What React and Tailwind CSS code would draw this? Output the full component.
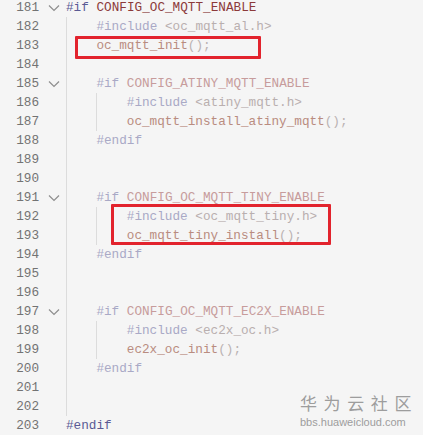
import React from 'react';

const colors = {
  dir: 'text-[#5a5a94]',
  macro: 'text-[#8c3a3a]',
  fdir: 'text-[#a9a9c6]',
  fmacro: 'text-[#c79c9c]',
  fstr: 'text-[#b9afaf]',
  ffn: 'text-[#b98c80]',
  fpunc: 'text-[#bab2b2]',
};

const lines = [
  { n: 181, fold: true, indent: 0, tokens: [['#if ', 'dir'], ['CONFIG_OC_MQTT_ENABLE', 'macro']] },
  { n: 182, indent: 1, tokens: [['#include ', 'fdir'], ['<oc_mqtt_al.h>', 'fstr']] },
  { n: 183, indent: 1, tokens: [['oc_mqtt_init', 'ffn'], ['();', 'fpunc']] },
  { n: 184, indent: 1, tokens: [] },
  { n: 185, fold: true, indent: 1, tokens: [['#if ', 'fdir'], ['CONFIG_ATINY_MQTT_ENABLE', 'fmacro']] },
  { n: 186, indent: 2, tokens: [['#include ', 'fdir'], ['<atiny_mqtt.h>', 'fstr']] },
  { n: 187, indent: 2, tokens: [['oc_mqtt_install_atiny_mqtt', 'ffn'], ['();', 'fpunc']] },
  { n: 188, indent: 1, tokens: [['#endif', 'fdir']] },
  { n: 189, indent: 1, tokens: [] },
  { n: 190, indent: 1, tokens: [] },
  { n: 191, fold: true, indent: 1, tokens: [['#if ', 'fdir'], ['CONFIG_OC_MQTT_TINY_ENABLE', 'fmacro']] },
  { n: 192, indent: 2, tokens: [['#include ', 'fdir'], ['<oc_mqtt_tiny.h>', 'fstr']] },
  { n: 193, indent: 2, tokens: [['oc_mqtt_tiny_install', 'ffn'], ['();', 'fpunc']] },
  { n: 194, indent: 1, tokens: [['#endif', 'fdir']] },
  { n: 195, indent: 1, tokens: [] },
  { n: 196, indent: 1, tokens: [] },
  { n: 197, fold: true, indent: 1, tokens: [['#if ', 'fdir'], ['CONFIG_OC_MQTT_EC2X_ENABLE', 'fmacro']] },
  { n: 198, indent: 2, tokens: [['#include ', 'fdir'], ['<ec2x_oc.h>', 'fstr']] },
  { n: 199, indent: 2, tokens: [['ec2x_oc_init', 'ffn'], ['();', 'fpunc']] },
  { n: 200, indent: 1, tokens: [['#endif', 'fdir']] },
  { n: 201, indent: 1, tokens: [] },
  { n: 202, indent: 1, tokens: [] },
  { n: 203, indent: 0, tokens: [['#endif', 'dir']] },
];

const Chevron = () => (
  <svg width="12" height="8" viewBox="0 0 12 8" fill="none">
    <path d="M1 1.5 L6 6.5 L11 1.5" stroke="#8e8e8e" strokeWidth="1.2" />
  </svg>
);

const CodeLine = ({ line }) => (
  <div className="flex h-[19px] items-center">
    <div className="w-[39px] text-right text-[#737373]">{line.n}</div>
    <div className="flex w-[27px] justify-center pl-[3px]">{line.fold && <Chevron />}</div>
    <div className="flex h-full items-center whitespace-pre">
      {Array.from({ length: line.indent }).map((_, i) => (
        <span key={i} className="h-full w-[30.4px] shrink-0 border-l border-[#dcdcdc]" />
      ))}
      {line.tokens.map(([text, kind], i) => (
        <span key={i} className={colors[kind]}>{text}</span>
      ))}
    </div>
  </div>
);

export default function App() {
  return (
    <div className="relative h-[435px] w-[423px] overflow-hidden bg-[#f5f5f5]">
      <div className="relative -mt-[2px] text-[12.7px] [font-family:'Liberation_Mono',monospace]">
        {lines.map((line) => (
          <CodeLine key={line.n} line={line} />
        ))}
        <div className="absolute left-[75px] top-[38px] h-[23px] w-[186px] rounded-[1px] border-[3px] border-[#e2232d]" />
        <div className="absolute left-[111px] top-[206px] h-[41px] w-[220px] rounded-[1px] border-[3px] border-[#e2232d]" />
      </div>
      <div className="absolute left-[300px] top-[393px] flex flex-col items-start text-[#9d9d9d]">
        <span className="text-[17px] leading-[20px] tracking-[6.6px] [font-family:'Noto_Sans_CJK_SC',sans-serif]">华为云社区</span>
        <span className="mt-[3px] text-[11px] leading-[12px] [font-family:'Liberation_Sans',sans-serif]">bbs.huaweicloud.com</span>
      </div>
    </div>
  );
}
